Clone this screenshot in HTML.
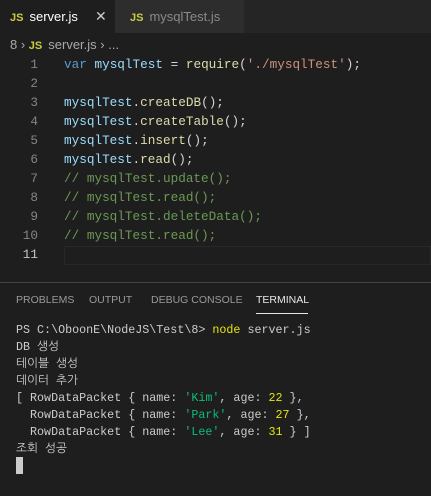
<!DOCTYPE html>
<html><head><style>
*{margin:0;padding:0;box-sizing:border-box}
body{width:431px;height:496px;background:#1e1e1e;overflow:hidden;position:relative;font-family:"Liberation Sans",sans-serif}
.tabs{position:absolute;left:0;top:0;width:431px;height:33px;background:#252526}
.tab{position:absolute;top:0;height:33px;font-size:13px;line-height:33px}
.js{color:#cbcb41;font-weight:bold;font-size:11px;margin-right:6px}
.bc{position:absolute;top:36px;left:10px;font-size:13px;color:#a9a9a9;line-height:18px}
.code{position:absolute;top:57px;left:0;font-family:"Liberation Mono",monospace;font-size:12.7px}
.ln{position:absolute;left:0;width:38px;text-align:right;color:#858585}
.l{position:absolute;left:64px;white-space:pre;color:#d4d4d4}
.v{color:#9cdcfe}.k{color:#569cd6}.f{color:#dcdcaa}.s{color:#ce9178}.c{color:#6a9955}
.term{position:absolute;left:16px;top:322px;font-family:"Liberation Mono","NanumGothic",monospace;font-size:11.7px;color:#cccccc;line-height:17px;white-space:pre}
.y{color:#e5e510}.g{color:#0dbc79}
.pt{position:absolute;top:294px;font-size:10.5px;color:#9a9a9a;white-space:pre}
</style></head><body>
<div class="tabs">
<div class="tab" style="left:0;width:115px;background:#1e1e1e;padding-left:10px;color:#fff"><span class="js">JS</span>server.js<span style="position:absolute;left:95px;color:#ccc;font-size:14px">✕</span></div>
<div class="tab" style="left:115px;width:129px;background:#2d2d2d;padding-left:15px;color:#8a8a8a"><span class="js">JS</span>mysqlTest.js</div>
</div>
<div class="bc">8 › <span class="js">JS</span>server.js › ...</div>
<div style="position:absolute;left:64px;top:246px;width:367px;height:19px;border:1px solid #282828"></div>
<div class="code">
<div class="ln" style="top:0">1</div><div class="l" style="top:0"><span class="k">var</span> <span class="v">mysqlTest</span> = <span class="f">require</span>(<span class="s">'./mysqlTest'</span>);</div>
<div class="ln" style="top:19px">2</div>
<div class="ln" style="top:38px">3</div><div class="l" style="top:38px"><span class="v">mysqlTest</span>.<span class="f">createDB</span>();</div>
<div class="ln" style="top:57px">4</div><div class="l" style="top:57px"><span class="v">mysqlTest</span>.<span class="f">createTable</span>();</div>
<div class="ln" style="top:76px">5</div><div class="l" style="top:76px"><span class="v">mysqlTest</span>.<span class="f">insert</span>();</div>
<div class="ln" style="top:95px">6</div><div class="l" style="top:95px"><span class="v">mysqlTest</span>.<span class="f">read</span>();</div>
<div class="ln" style="top:114px">7</div><div class="l c" style="top:114px">// mysqlTest.update();</div>
<div class="ln" style="top:133px">8</div><div class="l c" style="top:133px">// mysqlTest.read();</div>
<div class="ln" style="top:152px">9</div><div class="l c" style="top:152px">// mysqlTest.deleteData();</div>
<div class="ln" style="top:171px">10</div><div class="l c" style="top:171px">// mysqlTest.read();</div>
<div class="ln" style="top:190px;color:#c6c6c6">11</div>
</div>
<div style="position:absolute;left:0;top:282px;width:431px;height:1px;background:#444"></div>
<div class="pt" style="left:16px">PROBLEMS</div>
<div class="pt" style="left:89px">OUTPUT</div>
<div class="pt" style="left:151px">DEBUG CONSOLE</div>
<div class="pt" style="left:256px;color:#e7e7e7">TERMINAL</div>
<div style="position:absolute;top:313px;left:256px;width:52px;height:1px;background:#e7e7e7"></div>
<div class="term">PS C:\OboonE\NodeJS\Test\8&gt; <span class="y">node</span> server.js
DB 생성
테이블 생성
데이터 추가
[ RowDataPacket { name: <span class="g">'Kim'</span>, age: <span class="y">22</span> },
  RowDataPacket { name: <span class="g">'Park'</span>, age: <span class="y">27</span> },
  RowDataPacket { name: <span class="g">'Lee'</span>, age: <span class="y">31</span> } ]
조회 성공</div>
<div style="position:absolute;left:16px;top:457px;width:7px;height:17px;background:#ccc"></div>
</body></html>
